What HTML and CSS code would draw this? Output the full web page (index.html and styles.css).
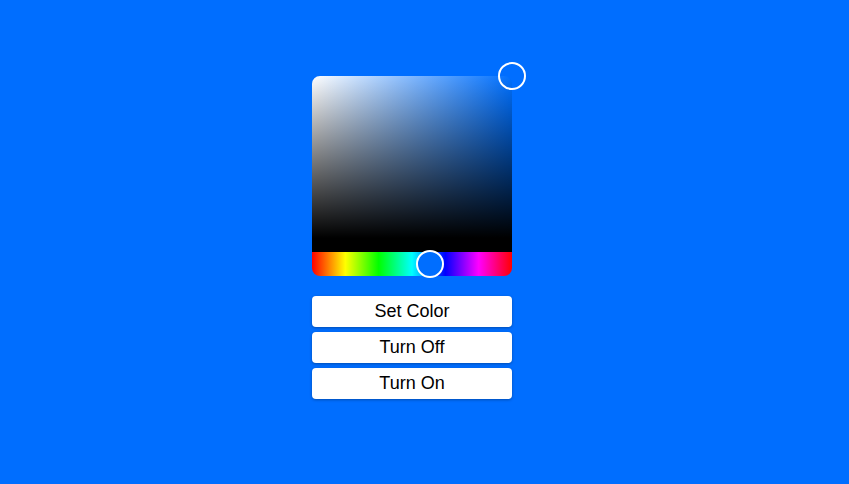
FILE: index.html
```html
<!DOCTYPE html>
<html>
<head>
<meta charset="utf-8">
<link rel="stylesheet" href="styles.css">
</head>
<body>
<div class="wrap">
  <div class="col">
    <div class="picker">
      <div class="sv"></div>
      <div class="hue"></div>
      <div class="handle handle-sv"></div>
      <div class="handle handle-hue"></div>
    </div>
    <div class="buttons">
      <button class="btn">Set Color</button>
      <button class="btn">Turn Off</button>
      <button class="btn">Turn On</button>
    </div>
  </div>
</div>
</body>
</html>
```
FILE: styles.css
```css
html, body {
  margin: 0;
  padding: 0;
  background: #006eff;
  height: 100%;
}
.wrap {
  display: flex;
  justify-content: center;
  padding-top: 76px;
}
.col {
  width: 225px;
  display: flex;
  flex-direction: column;
  align-items: flex-start;
}
.picker {
  position: relative;
  width: 200px;
  display: flex;
  flex-direction: column;
}
.sv {
  height: 176px;
  border-radius: 8px 8px 0 0;
  background:
    linear-gradient(to bottom, rgba(0,0,0,0) 0%, #000 92%),
    linear-gradient(to right, #fff, #0070ff);
}
.hue {
  height: 24px;
  border-radius: 0 0 8px 8px;
  background: linear-gradient(to right, #f00 0%, #ff0 16.67%, #0f0 33.33%, #0ff 50%, #00f 66.67%, #f0f 83.33%, #f00 100%);
}
.handle {
  position: absolute;
  width: 24px;
  height: 24px;
  border: 2px solid #fff;
  border-radius: 50%;
  background: #006eff;
}
.handle-sv {
  left: 186px;
  top: -14px;
  background: transparent;
}
.handle-hue {
  left: 104px;
  top: 174px;
}
.buttons {
  margin-top: 20px;
  display: flex;
  flex-direction: column;
  gap: 5px;
  width: 200px;
}
.btn {
  height: 31px;
  width: 200px;
  border: none;
  border-radius: 4px;
  background: #fff;
  box-shadow: 0 1px 3px rgba(0,0,0,0.3);
  font-family: "Liberation Sans", Arial, sans-serif;
  font-size: 18px;
  color: #000;
  padding: 0;
  cursor: pointer;
}
```
